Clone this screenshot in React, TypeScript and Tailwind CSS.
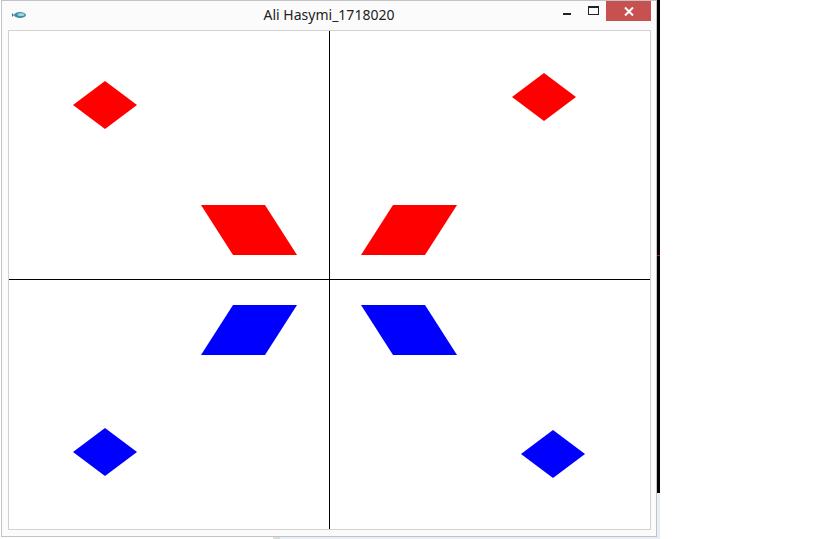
import React from "react";

const shapes = {
  red: [
    "73,105 105,81 137,105 105,129",
    "512,97 544,73 576,97 544,121",
    "201,205 265,205 297,255 233,255",
    "393,205 457,205 425,255 361,255",
  ],
  blue: [
    "233,305 297,305 265,355 201,355",
    "361,305 425,305 457,355 393,355",
    "73,452 105,428 137,452 105,476",
    "521,454 553,430 585,454 553,478",
  ],
};

function AppIcon() {
  return (
    <svg width="16" height="10" viewBox="0 0 16 10">
      <ellipse cx="8" cy="5" rx="6" ry="3" fill="#3d8fa3" />
      <ellipse cx="9" cy="4.5" rx="3.5" ry="1.6" fill="#9fd3de" />
      <path d="M2 5 L0 3 L0 7 Z" fill="#2d7489" />
    </svg>
  );
}

export default function App() {
  return (
    <div className="w-[819px] h-[539px] bg-white flex flex-col overflow-hidden">
      <div className="flex">
        <div className="w-[1px]" />
        {/* Window */}
        <div className="w-[656px] h-[537px] border border-[#c3c3c3] bg-[#fbfbfb] flex flex-col">
          {/* Title bar */}
          <div className="relative h-[29px] flex items-center justify-center">
            <div className="absolute left-[10px] top-[9px]">
              <AppIcon />
            </div>
            <span
              className="text-[14px] text-[#222] leading-none -mt-[2px]"
              style={{ fontFamily: '"Noto Sans", "Open Sans", sans-serif' }}
            >
              Ali Hasymi_1718020
            </span>
            <div className="absolute right-[5px] top-0 flex items-start">
              <div className="w-[26px] h-[20px] flex items-center justify-center">
                <div className="w-[8px] h-[2px] bg-[#222] mt-[5px]" />
              </div>
              <div className="w-[26px] h-[20px] flex items-center justify-center">
                <div className="w-[11px] h-[9px] border border-[#222] border-t-2 -mt-[2px]" />
              </div>
              <div className="w-[45px] h-[20px] bg-[#c75050] flex items-center justify-center">
                <svg width="10" height="9" viewBox="0 0 10 9">
                  <path d="M1 0.5 L9 8.5 M9 0.5 L1 8.5" stroke="#fff" strokeWidth="2" />
                </svg>
              </div>
            </div>
          </div>
          {/* Canvas */}
          <div className="ml-[6px] mr-[5px] mb-[6px] flex-1 border border-[#d2d2d2] bg-white">
            <svg width="641" height="498" viewBox="9 31 641 498" className="block">
              <line x1="329.5" y1="31" x2="329.5" y2="529" stroke="#000" strokeWidth="1" />
              <line x1="9" y1="279.5" x2="650" y2="279.5" stroke="#000" strokeWidth="1" />
              {shapes.red.map((p, i) => (
                <polygon key={"r" + i} points={p} fill="#ff0000" />
              ))}
              {shapes.blue.map((p, i) => (
                <polygon key={"b" + i} points={p} fill="#0000ff" />
              ))}
            </svg>
          </div>
        </div>
        {/* Edge of the window behind */}
        <div className="w-[3px] flex flex-col">
          <div className="h-[255px] bg-black" />
          <div className="h-[1px] bg-[#8a2a2a]" />
          <div className="h-[237px] bg-black" />
          <div className="flex-1 bg-[#e9eef6]" />
        </div>
      </div>
      <div className="flex h-[2px]">
        <div className="w-[273px]" />
        <div className="w-[7px] bg-[#dcdcdc]" />
        <div className="w-[380px] bg-[#e9eef6]" />
      </div>
    </div>
  );
}
